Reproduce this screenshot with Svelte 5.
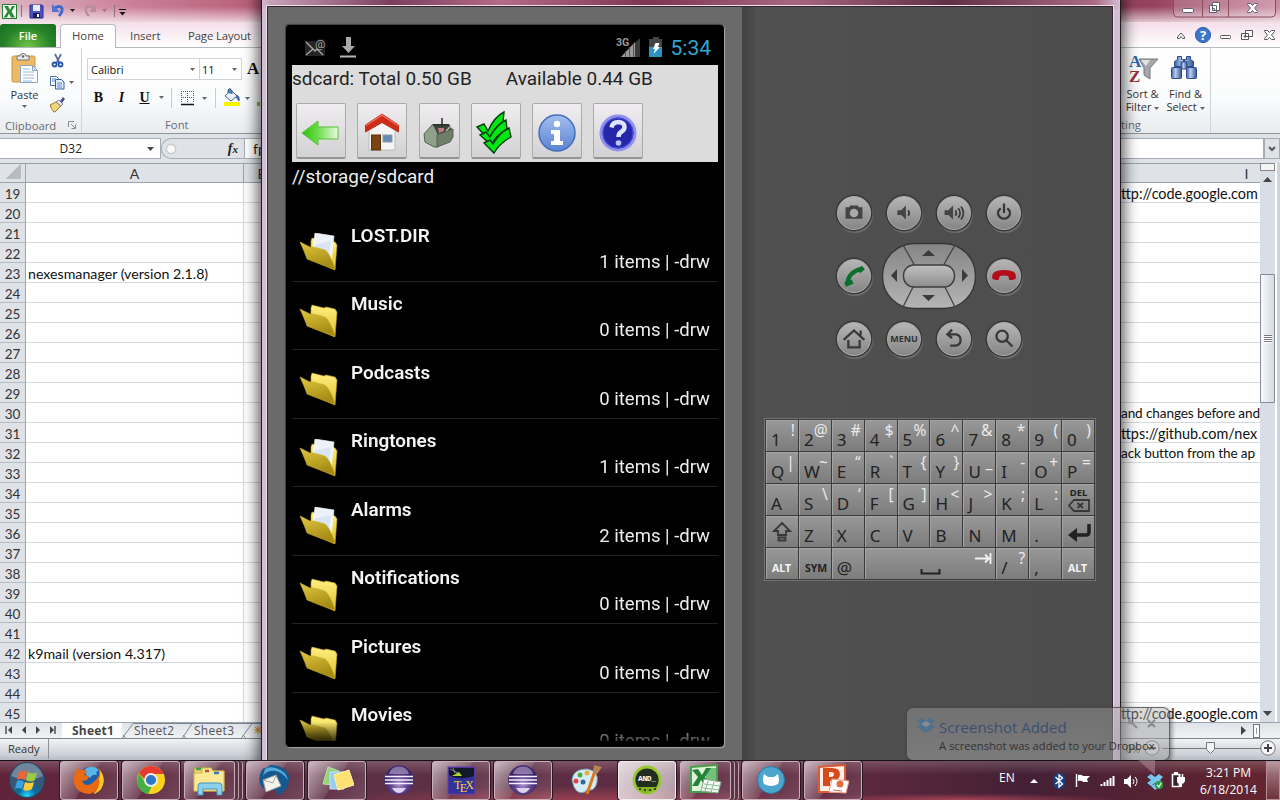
<script>
  const notes = { 23: 'nexesmanager (version 2.1.8)', 42: 'k9mail (version 4.317)' };
  const links = {
    19: 'ttp://code.google.com',
    30: 'and changes before and',
    31: 'ttps://github.com/nex',
    32: 'ack button from the ap',
    45: 'ttp://code.google.com'
  };
  const prose = [30, 32];
  const rows = Array.from({ length: 27 }, (_, i) => 19 + i);
  const folders = [
    ['LOST.DIR', 1], ['Music', 0], ['Podcasts', 0], ['Ringtones', 1],
    ['Alarms', 2], ['Notifications', 0], ['Pictures', 0], ['Movies', 0]
  ];
  const keys = [
    ['1', '!'], ['2', '@'], ['3', '#'], ['4', '$'], ['5', '%'], ['6', '^'], ['7', '&'], ['8', '*'], ['9', '('], ['0', ')'],
    ['Q', '|'], ['W', '~'], ['E', '“'], ['R', '`'], ['T', '{'], ['Y', '}'], ['U', '_'], ['I', '-'], ['O', '+'], ['P', '='],
    ['A', ''], ['S', '\\'], ['D', '‘'], ['F', '['], ['G', ']'], ['H', '<'], ['J', '>'], ['K', ';'], ['L', ':'], ['DEL', '', 'del'],
    ['', '', 'shift'], ['Z', ''], ['X', ''], ['C', ''], ['V', ''], ['B', ''], ['N', ''], ['M', ''], ['.', ''], ['', '', 'enter'],
    ['ALT', '', 'alt'], ['SYM', '', 'sym'], ['@', ''], ['', '', 'space'], ['/', '?'], [',', ''], ['ALT', '', 'alt']
  ];
  const apps = [
    'firefox', 'chrome', 'explorer', 'thunderbird', 'notes', 'eclipse', 'tex', 'eclipse2', 'paint', 'android', 'excel', 'github', 'powerpoint'
  ];
  const bare = ['eclipse', 'paint'];
  const stacked = ['explorer', 'excel'];
</script>

{#snippet drop()}<svg class="drop" width="5" height="3" viewBox="0 0 5 3"><path d="M0 0h5L2.5 3z" fill="#666" /></svg>{/snippet}

<div class="desktop">
  <section class="excel">
    <header class="title">
      <svg width="130" height="22" viewBox="0 0 130 22">
        <rect x="2.500" y="4.500" width="14" height="14" fill="#f2faf2" stroke="#2a7a35" />
        <path d="M4 6l4 0 2 4 2-4h3l-3.500 5.500 3.500 6h-4l-2-4-2 4H3.500l4-6z" fill="#2b8b3a" />
        <path d="M21.500 5v12M114.500 5v12" stroke="#8c6f7c" />
        <path d="M30 5h12l1 1v12H30z" fill="#4a52c4" stroke="#2d2f86" />
        <path d="M33 5h7v6h-7z" fill="#e9edff" /><path d="M33 13h7v5h-7z" fill="#1c1e4c" /><path d="M37 14h2v3h-2z" fill="#fff" />
        <path d="M54 9c4-4 9-3 8 2-.3 2-1.500 3-3 5" fill="none" stroke="#3f68c8" stroke-width="2.800" /><path d="M52 4v8h8z" fill="#4c76d2" />
        <path d="M70 9h5l-2.500 3z" fill="#222" />
        <path d="M86 9c4-4 9-3 8 2" transform="translate(180 0) scale(-1 1)" fill="none" stroke="#b58d9c" stroke-width="2.200" /><path d="M86 11c0 2 1 3 3 5" fill="none" stroke="#b58d9c" stroke-width="2.200" /><path d="M96 5v7h-7z" fill="#b58d9c" />
        <path d="M102 9h5l-2.500 3z" fill="#9a7683" />
        <path d="M119 9.500h7" stroke="#111" /><path d="M119.500 12h6l-3 3.500z" fill="#111" />
      </svg>
      <svg class="caption" width="104" height="18" viewBox="0 0 104 18">
        <path d="M.5 0v13q0 4 4 4h94q4 0 4-4V0M29.500 0v17M55.500 0v17" fill="#ffffff28" stroke="#8c4a61" />
        <rect x="9.500" y="8.500" width="11" height="4" rx="1" fill="#fff" stroke="#656072" />
        <path d="M39.500 2.500h7v8h-7zM36.500 5.500h7v7h-7zM39.500 8.500h2v2h-2z" fill="#fff" stroke="#656072" />
        <path d="M74.500 3.500h3l2 2 2-2h3v1l-3 3.500 3 3.500v1h-3l-2-2-2 2h-3v-1l3-3.500-3-3.500z" fill="#fff" stroke="#656072" />
      </svg>
    </header>
    <nav class="tabs">
      <b class="file">File</b><span class="home">Home</span><span class="ins">Insert</span><span class="page">Page Layout</span>
      <svg class="wincontrols" width="100" height="20" viewBox="0 0 100 20">
        <path d="M2.500 12l3.500-4 3.500 4v1.500h-2L6 11.500 4.500 13.500h-2z" fill="#fff" stroke="#555" />
        <circle cx="28" cy="10" r="7.600" fill="#3b76cb" stroke="#2f5fae" />
        <text x="28" y="15" text-anchor="middle" font-size="13" font-weight="700" fill="#fff">?</text>
        <rect x="45.500" y="10.500" width="10" height="3" rx="1" fill="#fff" stroke="#555" />
        <path d="M70.500 5.500h7v6h-7zM66.500 8.500h7v6h-7zM69 11h2v1h-2z" fill="#fff" stroke="#555" />
        <path d="M89.500 5.500h3l2 2 2-2h3v1l-3 3.500 3 3.500v1h-3l-2-2-2 2h-3v-1l3-3.500-3-3.500z" fill="#fff" stroke="#555" />
      </svg>
    </nav>
    <div class="ribbon">
      <div class="group clipboard">
        <div class="tools">
          <div class="paste">
            <svg width="28" height="32" viewBox="0 0 28 32">
              <rect x="1" y="3" width="23" height="26" rx="1.500" fill="#edbb66" stroke="#c79545" />
              <path d="M6 3h3q0-2.500 3-2.500T15 3h3v4H6z" fill="#e6e8ec" stroke="#777" /><circle cx="12" cy="3.500" r="1.200" fill="#666" />
              <path d="M9.500 12.500h12l5 5v12h-17z" fill="#fff" stroke="#8ba4c8" /><path d="M12 16h7M12 19h11M12 22h11M12 25h11M12 28h9" stroke="#9bb6dc" />
              <path d="M21.500 12.500v5h5z" fill="#d5e2f4" stroke="#8ba4c8" />
            </svg>
            <span>Paste</span>{@render drop()}
          </div>
          <svg class="clips" width="26" height="62" viewBox="0 0 26 62">
            <path d="M6 2l4.500 9M12 2L7.500 11" stroke="#596d93" stroke-width="1.700" /><circle cx="5.500" cy="12.500" r="2" fill="none" stroke="#2355ad" stroke-width="1.800" /><circle cx="11.500" cy="12.500" r="2" fill="none" stroke="#2355ad" stroke-width="1.800" />
            <path d="M1.500 24.500h6l2 2v7h-8z" fill="#f4f8ff" stroke="#4b70b0" /><path d="M6.500 27.500h6l2.500 2.500v7H6.500z" fill="#e5eeff" stroke="#315da8" /><path d="M8 31h5M8 33h5M8 35h5M3 27h4M3 29h3" stroke="#5f87c8" />
            <path d="M20 29h5l-2.500 3z" fill="#666" />
            <path d="M1 53l6-3 5 4-6 6q-2 1-5-7z" fill="#efd57e" stroke="#9b7b2a" /><path d="M7 50l3-2 4 4-2 2z" fill="#e5e5ee" stroke="#888" /><path d="M11 49l3-4 2 2-3 4z" fill="#4e4d8f" />
          </svg>
        </div>
        <div class="label">Clipboard <svg width="8" height="8" viewBox="0 0 8 8"><path d="M.5 6V.5H6M3 3l4 4M7.500 3.500v4h-4" fill="none" stroke="#888" /></svg></div>
      </div>
      <div class="group font">
        <div class="combos"><div class="combo face">Calibri {@render drop()}</div><div class="combo size">11 {@render drop()}</div><b class="grow">A</b></div>
        <div class="styles">
          <b>B</b><i>I</i><u>U</u>{@render drop()}
          <svg class="fmt" width="92" height="22" viewBox="0 0 92 22">
            <path d="M3.500 1v20M47.500 1v20" stroke="#c8cbd0" />
            <path d="M13.500 4v12M19.500 4v12M25.500 4v12M13 4.500h13M13 10.500h13" stroke="#555" stroke-dasharray="1 1" /><path d="M13 17.500h13" stroke="#111" stroke-width="1.500" />
            <path d="M34 10h5l-2.500 3z" fill="#666" />
            <path d="M57 9l6-6 6 6-6 5z" fill="#e9f0fa" stroke="#44608d" /><path d="M60 6V3q2-3 4 1v3M68 8q4 1 3 6l-3-4" fill="#517bbb" stroke="#44608d" />
            <path d="M56 15h16v4H56z" fill="#fbf400" /><path d="M77 10h5l-2.500 3z" fill="#666" /><path d="M89 15h3v4h-3z" fill="#81bf4b" />
          </svg>
        </div>
        <div class="label">Font</div>
      </div>
      <div class="group edit">
        <div class="tools">
          <div class="big">
            <svg width="32" height="32" viewBox="0 0 32 32">
              <text x="2" y="14" font-family="Liberation Serif" font-size="17" font-weight="700" fill="#315eac">A</text>
              <text x="2" y="29" font-family="Liberation Serif" font-size="17" font-weight="700" fill="#9c2f38">Z</text>
              <path d="M12 6h19l-8 9v11l-6-4v-7z" fill="#a5a7ab" stroke="#74777c" /><path d="M14 7h9l-4 6z" fill="#e2e4e6" />
            </svg>
            <span>Sort &amp;<br />Filter {@render drop()}</span>
          </div>
          <div class="big">
            <svg width="32" height="32" viewBox="0 0 32 32">
              <defs><linearGradient id="gb"><stop stop-color="#3f64a8" /><stop offset=".4" stop-color="#b9cdf0" /><stop offset="1" stop-color="#34578f" /></linearGradient></defs>
              <g fill="url(#gb)" stroke="#2d4c88"><path d="M7.500 3.500h4v3h2v7h-9v-5l3-2zM16.500 3.500h4v3l3 2v5h-9v-7h2z" /><rect x="11" y="9" width="6" height="7" /><rect x="1.500" y="14.500" width="10" height="11" rx="1" /><rect x="16.500" y="14.500" width="10" height="11" rx="1" /></g>
            </svg>
            <span>Find &amp;<br />Select {@render drop()}</span>
          </div>
        </div>
        <div class="label">Editing</div>
      </div>
    </div>
    <div class="formula">
      <div class="name">D32<svg width="8" height="4" viewBox="0 0 8 4"><path d="M0 0h7L3.500 4z" fill="#444" /></svg></div>
      <div class="fx"><i></i><em>f<small>x</small></em></div>
      <div class="entry">fp</div>
      <div class="expand"><svg width="8" height="6" viewBox="0 0 8 6"><path d="M1 1l3 3 3-3" fill="none" stroke="#555" stroke-width="2" /></svg></div>
    </div>
    <div class="book">
      <div class="sheet">
        <div class="heads"><div class="corner"></div><div class="colA">A</div><div class="colB">B</div><div class="colI">I</div></div>
        {#each rows as n}
          <div class="row"><div class="num">{n}</div><div class="cell">{notes[n] ?? ''}</div><div class="mid"></div><div class="cell link" class:prose={prose.includes(n)}>{links[n] ?? ''}</div></div>
        {/each}
      </div>
      <div class="scroll">
        <i class="split"></i>
        <svg width="9" height="5" viewBox="0 0 9 5"><path d="M0 5h9L4.500 0z" fill="#444" /></svg>
        <div class="thumb"><i></i></div>
        <svg width="9" height="5" viewBox="0 0 9 5"><path d="M0 0h9L4.500 5z" fill="#444" /></svg>
      </div>
    </div>
    <div class="sheets">
      <svg width="62" height="16" viewBox="0 0 62 16"><path d="M6 3v8M55 3v8" stroke="#444" stroke-width="1.400" /><path d="M12 3v8L8 7zM26 3v8l-4-4zM36 3v8l4-4zM50 3v8l4-4z" fill="#444" /></svg>
      <b class="tab1">Sheet1</b>
      <svg class="tabshape" width="140" height="16" viewBox="0 0 140 16"><path d="M0 15.500L11 .5h137M0 15.500h140M60 15.500L70 .5M119 15.500l11-15M1 12l3 3.500M61 12l3 3.500M121 12l3 3.500" fill="none" stroke="#7d8590" /><text x="12" y="12" textLength="40">Sheet2</text><text x="72" y="12" textLength="40">Sheet3</text><path d="M136 3v8M132 7h8M133 4l6 6M139 4l-6 6" stroke="#d58d20" /></svg>
      <svg class="hs" width="140" height="16" viewBox="0 0 140 16"><path d="M121 3v9l5-4.500z" fill="#444" /><rect x="133.500" y="1.500" width="6" height="13" fill="#fff" stroke="#777" /><path d="M136.500 5v6" stroke="#999" /></svg>
    </div>
    <footer class="ready"><span>Ready</span>
      <div class="zoom">0%<svg width="140" height="20" viewBox="0 0 140 20"><path d="M22 9.500h100" stroke="#777" /><path d="M66.500 3.500h8v7l-4 4-4-4z" fill="#f4f5f7" stroke="#777" /><circle cx="12" cy="9" r="7.200" fill="#f5f5f7" stroke="#777" /><path d="M8 9h8" stroke="#444" stroke-width="2" /><circle cx="128" cy="9" r="7.200" fill="#f5f5f7" stroke="#777" /><path d="M124 9h8M128 5v8" stroke="#444" stroke-width="2" /></svg></div>
    </footer>
  </section>

  <section class="emulator">
    <div class="device">
      <div class="bezel">
        <div class="screen">
          <div class="status">
            <svg width="60" height="28" viewBox="0 0 60 28"><rect x="2" y="7" width="20" height="15" fill="#252525" /><path d="M3 8l9 9 7-7M3 21l7-6M20 21l-6-6" fill="none" stroke="#aaa" stroke-width="1.300" /><circle cx="17.500" cy="10" r="5.500" fill="#161616" /><text x="12" y="14" font-family="Roboto" font-size="11.500" fill="#aaa">@</text><path d="M43 3h5v9h4l-6.500 7L39 12h4z" fill="#a9a9a9" /><path d="M37 22.500h16" stroke="#b5b5b5" stroke-width="2" /></svg>
            <svg class="radio" width="52" height="28" viewBox="0 0 52 28"><text x="0" y="11.500" font-family="Roboto" font-size="10.500" font-weight="700" fill="#999">3G</text><path d="M5 23L24 4v19z" fill="#393939" /><path d="M5 23L19 8v15z" fill="#999" /><path d="M9.500 17v6M13.500 13v10M17.500 10v13" stroke="#555" /><rect x="33" y="5" width="13" height="18" fill="#444" /><rect x="37" y="3" width="6" height="3" fill="#444" /><rect x="33" y="13" width="13" height="10" fill="#2b93bd" /><path d="M39.500 9h4l-1.500 4h2l-6.500 7 1.500-5h-2z" fill="#fff" /></svg>
            <time>5:34</time>
          </div>
          <div class="panel">
            <div class="sizes"><span>sdcard: Total 0.50 GB</span><span>Available 0.44 GB</span></div>
            <div class="actions">
              <button aria-label="Back"><svg width="40" height="40" viewBox="0 0 40 40"><defs><linearGradient id="ga"><stop stop-color="#31bd12" /><stop offset=".4" stop-color="#64dc41" /><stop offset="1" stop-color="#e8f9e3" /></linearGradient></defs><path d="M1 20L17 8v6h20v12H17v6z" fill="url(#ga)" stroke="#55c239" /></svg></button>
              <button aria-label="Home"><svg width="40" height="40" viewBox="0 0 40 40"><path d="M7 16L20 6l13 10v21H7z" fill="#f5f5f5" stroke="#bbb" /><path d="M3.500 12L20 1l16.500 11v7L20 9.500 3.500 19z" fill="#cf2c18" stroke="#ba321f" /><path d="M3.500 12L20 1l16.500 11-1 1L20 3 4.500 13z" fill="#ee6959" /><rect x="9.500" y="22" width="9" height="15" fill="#7a4510" stroke="#5b300a" /><rect x="21" y="22" width="9" height="7" fill="#658cb0" stroke="#8b9aa8" /></svg></button>
              <button class="narrow" aria-label="Tools"><svg width="34" height="40" viewBox="0 0 34 40"><path d="M2 21l9-10 5 10v13l-4 0-9-5z" fill="#8fa18a" stroke="#53634f" /><path d="M11 11h16l4 7-15 4z" fill="#3d453c" /><path d="M15 22l16-6v8l-3 5-13 5z" fill="#6d7f68" stroke="#53634f" /><path d="M11 12h16M20 5v9" stroke="#2c302c" stroke-width="1.500" /><path d="M16 15h6v3l-5 2z" fill="#c27c7c" /><path d="M24 18l5-5" stroke="#b5b5b5" stroke-width="1.500" /></svg></button>
              <button aria-label="Select"><svg width="44" height="46" viewBox="0 0 44 46"><g fill="#00e813" stroke="#063b0a" stroke-width="1.400"><path d="M3 17l7-3 4 7q6-14 16-19l-1 10q-10 6-14 18z" /><path d="M6 25l6-3 4 5q6-12 16-17l1 9q-11 6-16 16z" /><path d="M10 33l6-3 3 4q6-11 16-16l2 9q-11 6-17 16z" /></g></svg></button>
              <button aria-label="Info"><svg width="40" height="40" viewBox="0 0 40 40"><defs><linearGradient id="gi" x2="0" y2="1"><stop stop-color="#a4bdef" /><stop offset="1" stop-color="#5a82d1" /></linearGradient></defs><circle cx="20" cy="20" r="18" fill="url(#gi)" stroke="#426fba" stroke-width="1.500" /><circle cx="20" cy="11" r="3.200" fill="#fff" /><path d="M14 17h9v11h3v4H14v-4h3v-7h-3z" fill="#fff" /></svg></button>
              <button aria-label="Help"><svg width="40" height="40" viewBox="0 0 40 40"><circle cx="20" cy="20" r="17" fill="#2527a8" stroke="#9090ef" stroke-width="3" /><circle cx="20" cy="20" r="15" fill="none" stroke="#4b4edb" /><path d="M13.500 14.500q1-5.500 7-5.500 6 .5 6 5 0 3-3.500 5-2.500 1.500-2.500 5" fill="none" stroke="#dfe4ff" stroke-width="4.500" /><circle cx="20.500" cy="30" r="2.800" fill="#b9c4ff" /></svg></button>
            </div>
          </div>
          <div class="path">//storage/sdcard</div>
          <div class="list">
            {#each folders as [name, count]}
              <div class="folder" class:filled={count > 0}>
                <svg width="40" height="42" viewBox="0 0 40 42">
                  <defs><linearGradient id="fb" x2="0" y2="1"><stop stop-color="#fff07e" /><stop offset="1" stop-color="#dcbf35" /></linearGradient><linearGradient id="ff" x2=".4" y2="1"><stop stop-color="#e0c83e" /><stop offset="1" stop-color="#a58a14" /></linearGradient></defs>
                  <path d="M12 8l1-3 12 3 2-1 9 2 2 3-2 25-24-12z" fill="url(#fb)" stroke="#bd9d22" stroke-width=".6" />
                  {#if count}<path d="M16 0l19 3-3 26-18-14z" fill="#edf2fa" stroke="#fff" stroke-width=".6" /><path d="M15 12l17-4-3 19z" fill="#d9e5f4" />{/if}
                  <path d="M1 9l10 5 4 0 11 3q4 2 10 18l-1 1.500L8 26Q6 20 1 9z" fill="url(#ff)" stroke="#cbb02e" stroke-width=".6" />
                </svg>
                <div class="info"><b>{name}</b><span>{count} items | -drw</span></div>
              </div>
            {/each}
          </div>
        </div>
      </div>
      <div class="controls">
        <div class="pad">
          <div class="round"><svg viewBox="0 0 34 34"><path d="M8 11h4l1-2h8l1 2h4v12H8z" /><circle cx="17" cy="17" r="4.500" fill="#aaa" /></svg></div>
          <div class="round"><svg viewBox="0 0 34 34"><path d="M10 14h4l5-5v15l-5-5h-4z" /><path class="line" d="M21.500 14q2 3 0 6" /></svg></div>
          <div class="round"><svg viewBox="0 0 34 34"><path d="M7 14h4l5-5v15l-5-5H7z" /><path class="line" d="M18.500 14q2 3 0 6M21.500 12q4 5 0 10M24.500 10q5 7 0 14" /></svg></div>
          <div class="round"><svg viewBox="0 0 34 34"><path class="line bold" d="M13.500 12q-4 3-2.500 7 2 4 6 4t6-4q1.500-4-2.500-7M17 7v10" /></svg></div>
          <div class="round"><svg viewBox="0 0 34 34"><g fill="none" stroke="#08702a"><path d="M10 25Q11 13 24 9.500" stroke-width="4.500" /><path d="M7.500 26l8-3M22 12l5-4" stroke-width="5" /></g></svg></div>
          <div class="dpad"><svg width="96" height="68" viewBox="0 0 96 68"><defs><linearGradient id="gd" x2="0" y2="1"><stop stop-color="#858585" /><stop offset="1" stop-color="#b5b5b5" /></linearGradient><linearGradient id="gc" x2="0" y2="1"><stop stop-color="#c0c0c0" /><stop offset="1" stop-color="#8d8d8d" /></linearGradient></defs><rect x="1.500" y="1.500" width="93" height="65" rx="32" fill="url(#gd)" stroke="#363636" stroke-width="1.400" /><path d="M22 3l12 21M74 3L62 24M22 65l10-20M74 65L64 45" stroke="#444" stroke-width="1.300" /><rect x="22.500" y="23" width="51" height="22" rx="10.500" fill="url(#gc)" stroke="#3e3e3e" stroke-width="1.400" /><path d="M41 14h13l-6.500-6zM41 53h13l-6.500 6zM16 27v13l-6-6.500zM81 27v13l6-6.500z" fill="#3b3b3b" /></svg></div>
          <div class="round"><svg viewBox="0 0 34 34"><path d="M4.500 16q1-3 4-4 8.500-2.500 17 0 3.500 1 4 4v4q-4 2-7 1l-1-4q-4.500-1-9 0l-1 4q-3 1-7-1z" fill="#b30c1a" /></svg></div>
          <div class="round"><svg viewBox="0 0 34 34"><path class="line bold" d="M6 18L17 8l11 10M11 18v8h12v-8M24 8v5" /></svg></div>
          <div class="round menu">MENU</div>
          <div class="round"><svg viewBox="0 0 34 34"><path class="line bold" d="M15 7l-5 5 5 4M10 12h9q5 1 5 6t-5 6h-6" /></svg></div>
          <div class="round"><svg viewBox="0 0 34 34"><circle class="line bold" cx="15" cy="14" r="6" /><path class="line bold" d="M19 18l7 7" /></svg></div>
        </div>
        <div class="keys">
          {#each keys as [main, alt, kind]}
            <div class="key {kind ?? ''}">
              {#if kind === 'shift'}<svg width="22" height="22" viewBox="0 0 22 22"><path class="line" d="M10 2l8 8h-4v4H6v-4H2zM6.500 16.500h7v3h-7z" /></svg>
              {:else if kind === 'enter'}<svg width="24" height="20" viewBox="0 0 24 20"><path d="M21 2v8q0 3-3 3H8" fill="none" stroke="#222" stroke-width="3.500" /><path d="M0 13l9-7v14z" fill="#222" /></svg>
              {:else if kind === 'space'}<svg width="131" height="30" viewBox="0 0 131 30"><path d="M55.500 20v4.500h18V20" fill="none" stroke="#222" stroke-width="2" /><path d="M109 9.500h13M119 5.500l4 4-4 4M124.500 4v11" fill="none" stroke="#f2f2f2" stroke-width="1.800" /></svg>
              {:else}<span>{main}</span><sup>{alt}</sup>
                {#if kind === 'del'}<svg width="22" height="13" viewBox="0 0 22 13"><path class="line" d="M1 6.500L6 1h15v11H6zM9.500 4l5.500 5M15 4L9.500 9" /></svg>{/if}
              {/if}
            </div>
          {/each}
        </div>
      </div>
    </div>
  </section>

  <aside class="toast">
    <svg width="18" height="16" viewBox="0 0 18 16"><path d="M5 0l4 3 4-3 5 3-4 3 4 3-5 3-4-3-4 3-5-3 4-3-4-3zM4 12l5-2 5 2-5 3z" fill="#4d718e" /><path d="M4 6l5-3 5 3-5 3z" fill="#878b8e" /></svg>
    <div><h4>Screenshot Added</h4><p>A screenshot was added to your Dropbox</p></div>
    <svg class="close" width="32" height="12" viewBox="0 0 32 12"><path d="M4 3l7 7M3 1v4h4M22 2l7 7M29 2l-7 7" fill="none" stroke="#8c8c8c" stroke-width="2.200" /></svg>
  </aside>

  <footer class="taskbar">
    <div class="start"><svg width="38" height="38" viewBox="0 0 38 38"><defs><radialGradient id="orb" cy=".95"><stop stop-color="#27d9fc" /><stop offset=".5" stop-color="#0b6b9f" /><stop offset="1" stop-color="#385776" /></radialGradient></defs><circle cx="19" cy="19" r="17.500" fill="url(#orb)" stroke="#234458" /><path d="M3 15Q8 2 19 2t16 13q-15 7-32 0z" fill="#ffffff48" /><path d="M11 11q4-3 8 0l-2 8q-4-3-8 0z" fill="#ed6535" /><path d="M20 11q5 3 9 0l-2 8q-4 3-9 0z" fill="#98cb42" /><path d="M9 20q4-2 7 1l-2 7q-4-2-7 0z" fill="#3ba2e2" /><path d="M17 21q5 2 9 0l-2 7q-4 3-9 1z" fill="#fccc38" /></svg></div>
    <div class="apps">
      {#each apps as app}
        <div class="app {app}" class:bare={bare.includes(app)} class:stacked={stacked.includes(app)}>
          <svg width="34" height="34" viewBox="0 0 34 34">
            {#if app === 'firefox'}
              <circle cx="18" cy="16" r="12" fill="#1d5fa8" /><path d="M13 6q8-5 14 1-4 2-2 5-5-1-7 3-5-2-5-9z" fill="#59b6e8" /><path d="M4 8l3-3 0 3q3-2 6-1l2 1-3 4 5 1-2 4-5 1q3 6 9 3l5-4q6-7 2-12 6 4 5 12-2 12-14 14Q4 30 2 19 1 12 4 8z" fill="#e96a14" /><path d="M27 7q7 7 4 15-3 8-10 9 8-6 6-15 2-4 0-9z" fill="#fdc62d" />
            {:else if app === 'chrome'}
              <circle cx="17" cy="17" r="14" fill="#fbd21c" /><path d="M5 10Q9 3 17 3t13 8H17q-5 1-6 6z" fill="#e53b31" /><path d="M5 10l7 11 6 2-4 8Q5 29 3 20q0-5 2-10z" fill="#48ad43" /><circle cx="17" cy="17" r="6" fill="#3177c8" stroke="#eee" stroke-width="1.800" />
            {:else if app === 'explorer'}
              <path d="M2 5h11l2 3h17v20H2z" fill="#eed66e" stroke="#b49138" /><path d="M10 5h9l2 3h11v20H2V10h8z" fill="#fbe996" stroke="#d2b251" /><path d="M4 6h5" stroke="#3fa045" stroke-width="2.500" /><path d="M13 8h4" stroke="#c74b35" stroke-width="2.500" /><path d="M22 10h5" stroke="#3c78b9" stroke-width="2.500" /><path d="M9 20h18q3 0 3 3v9h-5v-6H11v6H6v-9q0-3 3-3z" fill="#8bd1ee" stroke="#4395bb" />
            {:else if app === 'thunderbird'}
              <path d="M6 5q3 1 6-3 15 0 19 11 1 12-8 18l-5 1 3-4-12-1Q-1 24 2 12q1-5 4-7z" fill="#155990" /><path d="M7 6q4-3 11-1 10 3 12 12-6-8-12-9Q9 7 5 13z" fill="#57a9dc" /><path d="M5 17l13-5 5 11-15 6z" fill="#f4f3ec" stroke="#9d9b92" /><path d="M5 17l10 3 3-8" fill="none" stroke="#aaa" />
            {:else if app === 'notes'}
              <path d="M8 4l11 4-4 14-12-1z" fill="#94d57b" stroke="#bddfac" /><path d="M10 9h14v17H10z" fill="#99ccf0" stroke="#c4e4f9" /><path d="M14 12l15-5 5 15-16 5z" fill="#fde171" stroke="#fff4a6" />
            {:else if app.startsWith('eclipse')}
              <defs><radialGradient id="ge" cy=".65"><stop stop-color="#a893cf" /><stop offset=".55" stop-color="#65468f" /><stop offset="1" stop-color="#3a2462" /></radialGradient></defs>
              <circle cx="17" cy="17" r="14.500" fill="url(#ge)" stroke="#4a3472" /><path d="M7 11Q9 3.500 17 3.500T27 11z" fill="#c9bce088" /><path d="M10 25q3 5 7 5t7-5z" fill="#dcd2ed" /><path d="M3 13.500h28M3 17h28M3 20.500h28" stroke="#f4f0ff" stroke-width="1.500" />
            {:else if app === 'tex'}
              <rect x="4" y="4" width="27" height="27" fill="#30339a" stroke="#6b3aa5" /><path d="M5 5h25v8q-15 5-25-1z" fill="#111827" /><path d="M8 13l7-4 3 4z" fill="#afd53b" /><path d="M6 6l8 4M9 5l2 5" stroke="#888" /><text x="10" y="26" font-family="Liberation Serif" font-size="12" fill="#ffd52e" textLength="20">T<tspan dy="3">E</tspan><tspan dy="-3">X</tspan></text>
            {:else if app === 'paint'}
              <path d="M4 17Q5 6 19 6q12 2 10 13-2 9-8 8-2-2-4 2-10 4-13-12z" fill="#d5ecf6" stroke="#7aa4b9" /><circle cx="12" cy="12" r="2.500" fill="#57a841" /><circle cx="19" cy="10" r="2.500" fill="#e8b03b" /><circle cx="8" cy="18" r="2.500" fill="#df4543" /><circle cx="15" cy="19" r="2.500" fill="#326998" /><path d="M19 31l8-23" stroke="#dd7a18" stroke-width="3" /><path d="M25 9l1-7 8 2-5 7z" fill="#b78555" />
            {:else if app === 'android'}
              <circle cx="17" cy="17" r="13" fill="#222c20" stroke="#9ac82f" stroke-width="2.800" /><path d="M6 24q5 7 11 6t11-6z" fill="#87b421" /><text x="8" y="18" font-family="Liberation Mono" font-size="8" font-weight="700" fill="#fff" textLength="18">AND_</text><path d="M9 26h2M14 27h2M19 27h2M24 26h2" stroke="#31421b" stroke-width="2" />
            {:else if app === 'excel'}
              <path d="M3 4l26-2v27H3z" fill="#def2d7" stroke="#45a149" stroke-width="2" /><path d="M18 5h10v19H18z" fill="#75bf7d" /><path d="M4 7l6-1 4 6 4-7h5l-6 9 6 9h-6l-4-6-3 6H4l6-9z" fill="#248339" /><path d="M16 16l17 3-3 11-17-2z" fill="#f5faf2" stroke="#87a78b" /><path d="M20 18l-3 10M26 19l-3 10M16 21l16 2M15 25l16 2" stroke="#8abc92" />
            {:else if app === 'github'}
              <circle cx="17" cy="17" r="13.500" fill="#4ba5cf" stroke="#237ca8" /><path d="M10 11l4 3h6l4-3q2 7 0 10-7 4-14 0-2-4 0-10z" fill="#fff" />
            {:else}
              <path d="M3 4l26-2v27H3z" fill="#fff0e9" stroke="#dd5b31" stroke-width="2" /><path fill-rule="evenodd" d="M7 5h9q8 0 8 6 0 7-10 7v5H7zM13 9v5h2q3 0 3-3 0-2-3-2z" fill="#d8491a" /><path d="M16 16l17 2-3 12-17-1z" fill="#fff" stroke="#e6a08c" /><circle cx="24" cy="21" r="3.500" fill="#e56b42" /><path d="M17 27l9 1" stroke="#e56b42" />
            {/if}
          </svg>
        </div>
      {/each}
    </div>
    <div class="tray">
      <span>EN</span>
      <svg width="190" height="30" viewBox="0 0 190 30"><path d="M12 17h8l-4-4z" fill="#fff" /><rect x="35" y="7" width="12" height="16" rx="6" fill="#163f82" /><path d="M37.500 11l7 7-3.500 3V9l3.500 3-7 6" fill="none" stroke="#fff" stroke-width="1.300" /><path d="M58.500 8v13" stroke="#fff" stroke-width="1.500" /><path d="M60 9q4-1 5 1h7l-3 3 1 3h-5q-1-2-5-1z" fill="#fff" /><path d="M83.500 20v-2M86.500 20v-4M89.500 20v-6M92.500 20v-8M95.500 20v-10" stroke="#fff" stroke-width="2" /><path d="M106 13h3l4-4v13l-4-4h-3z" fill="#fff" /><path d="M115 13q2 2 0 5M117 11q4 4 0 9" fill="none" stroke="#fff" /><path d="M133 8l4 3 4-3 4 3-3 3 3 3-4 3-4-3-4 3-4-3 4-3-4-3zM133 20l4-2 4 3-4 3z" fill="#77c6ee" /><circle cx="141" cy="19" r="4" fill="#24a13b" /><path d="M139 19l2 2 2-4" fill="none" stroke="#fff" stroke-width="1.200" /><path d="M154.500 8.500h7v12h-7z" fill="#38202d" stroke="#fff" stroke-width="1.600" /><path d="M156 7h4" stroke="#fff" stroke-width="2" /><path d="M159 11h8v4q-1 3-3 3v3h-2v-3q-3 0-3-3z" fill="#fff" /><path d="M161.500 8v4M164.500 8v4" stroke="#fff" stroke-width="1.500" /></svg>
      <div class="clock"><span>3:21 PM</span><span>6/18/2014</span></div>
      <div class="peek"></div>
    </div>
    <i class="tail"></i>
  </footer>
</div>

<style>
  :global(body) { margin: 0; overflow: hidden; }
  :global(*) { box-sizing: border-box; }
  .desktop { position: relative; width: 1280px; height: 800px; overflow: hidden; font-family: "Open Sans", sans-serif; font-size: 11px; color: #333; }
  svg { display: block; flex: none; }
  .excel { height: 761px; display: flex; flex-direction: column; background: #dfe3e8; }
  .title { height: 22px; flex: none; display: flex; justify-content: space-between; background: linear-gradient(#ffffff00 30%, #ffffffb0), linear-gradient(90deg, #ddb5c5, #cb8199 10%, #b85f7b 20%, #96425f 90%, #c98ba0 100%); }
  .caption { margin-right: 3px; }
  .tabs { height: 26px; flex: none; display: flex; align-items: flex-end; background: linear-gradient(#f4dfe9, #fff); border-bottom: 1px solid #b5b9be; font-size: 11.300px; color: #444; }
  .file { width: 56px; height: 23px; background: radial-gradient(at 50% 100%, #70c444, #278329 60%, #176d21); border-radius: 3px 3px 0 0; color: #fff; text-align: center; line-height: 23px; font-weight: 600; font-size: 11px; }
  .home { width: 56px; height: 24px; margin: 0 0 -1px 4px; border: 1px solid #b5b9be; border-bottom: 0; border-radius: 4px 4px 0 0; background: #fff; text-align: center; line-height: 22px; }
  .ins { padding-left: 14px; line-height: 22px; width: 72px; }
  .page { line-height: 22px; width: 80px; letter-spacing: -.1px; }
  .wincontrols { margin-left: auto; margin-right: 5px; align-self: flex-start; margin-top: 3px; }
  .ribbon { height: 86px; flex: none; display: flex; background: linear-gradient(#fff, #fafbfc 60%, #e9ebee); border-bottom: 1px solid #90959b; }
  .group { position: relative; border-right: 1px solid #d0d3d7; display: flex; flex-direction: column; }
  .label { margin-top: auto; height: 16px; line-height: 15px; color: #666d78; text-align: center; font-size: 11.300px; }
  .tools { display: flex; }
  .clipboard { width: 82px; }
  .clipboard .label { display: flex; align-items: center; justify-content: space-between; padding: 0 5px; }
  .paste { width: 49px; display: flex; flex-direction: column; align-items: center; padding-top: 5px; line-height: 18px; gap: 1px; }
  .clips { margin-top: 4px; }
  .font { width: 1015px; align-items: flex-start; }
  .font .label { padding-left: 83px; }
  .combos { display: flex; padding: 10px 0 0 5px; font-size: 11px; color: #111; }
  .combo { height: 22px; border: 1px solid #d0d3d7; display: flex; align-items: center; justify-content: space-between; padding: 0 4px 0 3px; background: #fff; }
  .face { width: 113px; }
  .size { width: 43px; margin-left: -1px; padding-left: 2px; }
  .grow { font: 700 17px/22px "Liberation Serif"; padding-left: 5px; }
  .styles { display: flex; align-items: center; height: 35px; padding-left: 8px; font: 14px "Liberation Serif"; color: #111; }
  .styles > b, .styles > i, .styles > u { width: 23px; text-align: center; flex: none; font-weight: 700; padding-right: 6px; }
  .fmt { margin-left: 4px; }
  .edit { width: 114px; padding-left: 24px; }
  .big { width: 43px; text-align: center; line-height: 13px; padding-top: 5px; display: flex; flex-direction: column; align-items: center; white-space: nowrap; gap: 2px; }
  .big span :global(.drop) { display: inline-block; vertical-align: middle; }
  .edit .label { margin-left: -16px; text-align: left; }
  .formula { height: 29px; flex: none; display: flex; padding: 4px 0; background: #dfe3e8; font-size: 12px; color: #222; }
  .name { width: 161px; background: #fff; border: 1px solid #a5acb5; border-left: 0; display: flex; align-items: center; justify-content: flex-end; gap: 65px; padding-right: 5px; }
  .fx { width: 83px; border: 1px solid #a5acb5; border-radius: 10px 0 0 10px; border-right: 0; display: flex; align-items: center; justify-content: space-between; padding: 0 6px 0 5px; }
  .fx i { width: 8px; height: 8px; border-radius: 50%; background: #f8f8f8; box-shadow: 0 0 2px #777; }
  .fx em { font: italic 700 14px "Liberation Serif"; } .fx small { font-size: 11px; }
  .entry { flex: 1; background: #fff; border: 1px solid #a5acb5; padding: 0 8px; font: 14px/20px Lato; }
  .expand { width: 16px; display: grid; place-items: center; border: 1px solid #a5acb5; }
  .book { height: 560px; flex: none; display: flex; overflow: hidden; }
  .sheet { width: 1260px; background: #fff; font: 14.400px/19px Lato, sans-serif; color: #111; }
  .heads { display: flex; height: 20px; line-height: 20px; background: #dfe3e8; border-top: 1px solid #9aa4b0; border-bottom: 1px solid #9aa4b0; text-align: center; color: #333; font-size: 14px; }
  .corner { width: 26px; border-right: 1px solid #9aa4b0; background: linear-gradient(135deg, transparent 58%, #b8bdc5 58%); background-size: 21px 15px; background-repeat: no-repeat; }
  .colA { width: 218px; border-right: 1px solid #9aa4b0; } .colB { width: 36px; } .colI { margin-left: auto; width: 27px; }
  .row { display: flex; height: 20px; border-bottom: 1px solid #d5d8dd; }
  .num { width: 26px; height: 20px; flex: none; background: #dfe3e8; border-right: 1px solid #9aa4b0; border-bottom: 1px solid #b3bbc5; text-align: center; color: #333; font-size: 13.500px; line-height: 22px; }
  .cell { width: 218px; flex: none; border-right: 1px solid #d5d8dd; padding-left: 2px; white-space: nowrap; line-height: 21px; height: 19px; font-size: 14.200px; }
  .mid { flex: 1; }
  .cell.link { width: 139px; padding: 0; border: 0; overflow: hidden; font-size: 14.400px; }
  .cell.prose { font-size: 13.600px; letter-spacing: -.12px; }
  .scroll { flex: 1; background: linear-gradient(90deg, #d9dee6 15px, #fff 15px, #fff 17px, #ccd2da 17px); display: flex; flex-direction: column; padding: 0 5px 7px 0; align-items: center; }
  .split { width: 15px; height: 8px; border: 1px solid #888; background: #f5f5f5; margin-bottom: 6px; flex: none; }
  .thumb { width: 15px; height: 129px; margin: 92px 0 auto; border: 1px solid #848c99; border-radius: 1px; background: linear-gradient(90deg, #f8f9fb, #d5dae3); display: grid; place-items: center; }
  .thumb i { width: 8px; height: 8px; background: repeating-linear-gradient(#777 0 1px, #fff 1px 2px); }
  .sheets { height: 16px; flex: none; display: flex; background: linear-gradient(#dfe3e8, #f0f2f4); border-top: 1px solid #9aa4b0; font-size: 12px; color: #444; margin-top: -1px; }
  .tab1 { width: 60px; padding-left: 10px; background: #fff; line-height: 15px; font-size: 12px; letter-spacing: .2px; }
  .tabshape { font-size: 12px; } .tabshape text { fill: #555; }
  .hs { margin-left: auto; margin-right: 20px; }
  .ready { flex: 1; display: flex; justify-content: space-between; background: linear-gradient(#f1f2f4, #cdd1d7 70%, #b4bac3); border-top: 1px solid #80878f; }
  .ready > span { padding: 2px 8px 0 8px; height: 20px; border-right: 1px solid #8d939a; font-size: 11.100px; }
  .zoom { display: flex; font-size: 10px; line-height: 20px; }

  .emulator { position: absolute; left: 261px; top: -10px; width: 860px; height: 790px; padding: 14px 6px 0 4px; border: 1px solid #221c22; background: linear-gradient(90deg, #d2bacf 0, #c8a1b7 1%, #7b3f5c 15%, #b46b88 28%, #7c3553 45%, #a8667e 62%, #603047 80%, #a96a82 97%, #d3bdd3 100%) top / 100% 18px no-repeat, #d1bed4; box-shadow: 0 0 14px 3px #000a; }
  .device { height: 100%; display: flex; border: 1px solid #eee1e9; outline: 1px solid #34232d; outline-offset: -2px; background: #4e4e4e; }
  .bezel { width: 479px; padding: 18px 0 0 18px; background: #6a6a6a; border: solid #434343; border-width: 1px 4px 0 1px; }
  .screen { width: 438px; height: 722px; border-radius: 4px; background: #000; box-shadow: 1px 1px 1px #a8a8a8, -1px -1px 1px #424242; padding: 0 6px 6px; display: flex; flex-direction: column; font-family: Roboto, sans-serif; font-size: 18.900px; color: #eee; overflow: hidden; }
  .status { height: 40px; flex: none; display: flex; align-items: center; padding: 5px 7px 0 11px; }
  .radio { margin-left: auto; margin-right: 3px; }
  time { font-size: 21px; color: #2fa8d6; }
  .panel { height: 97px; flex: none; background: #dcdcdc; color: #222; }
  .sizes { height: 38px; display: flex; gap: 34px; line-height: 28px; font-size: 18.950px; }
  .actions { display: flex; align-items: flex-start; padding-left: 4px; gap: 11.300px; }
  button { width: 50px; height: 56px; display: grid; place-items: center; border: 1px solid #aaa; border-bottom: 2px solid #949494; border-radius: 2px; padding: 4px 0 0; background: linear-gradient(#f0edf0, #d2d1d3); }
  .narrow { width: 41px; }
  .path { height: 51px; flex: none; line-height: 30px; }
  .list { overflow: hidden; flex: 1; -webkit-mask-image: linear-gradient(#000 509px, #0004 528px); mask-image: linear-gradient(#000 509px, #0004 528px); }
  .folder { height: 68.500px; display: flex; align-items: center; padding: 4px 8px 0 7px; border-bottom: 1px solid #232323; }
  .folder > svg { margin-top: 7px; }
  .folder.filled > svg { margin-top: 11px; }
  .info { flex: 1; display: flex; flex-direction: column; padding-left: 12px; line-height: 26px; }
  .info b { font-weight: 600; font-size: 18.900px; color: #f4f4f4; }
  .info span { align-self: flex-end; font-size: 18.500px; }
  .controls { flex: 1; display: flex; flex-direction: column; align-items: center; background: linear-gradient(90deg, #444, #505050 3%, #4d4d4d); }
  .pad { width: 184px; margin: 190px 0 0 -1px; display: grid; grid-template-columns: repeat(4, 34px); column-gap: 16px; row-gap: 29px; height: 160px; }
  .round { width: 34px; height: 34px; border-radius: 50%; background: linear-gradient(#b5b5b5, #868686); border: 1px solid #aaa; box-shadow: 0 0 0 1.500px #393939, 1px 2px 1px 1px #707070; fill: #444; }
  .round svg { width: 32px; height: 32px; }
  .line { fill: none; stroke: #383838; stroke-width: 1.800; }
  .line.bold { stroke-width: 2.400; }
  .dpad { grid-column: 2 / 4; margin: -17px 0 -17px -6px; }
  .menu { font-size: 9px; line-height: 32px; font-weight: 700; text-align: center; color: #333; }
  .keys { width: 330px; height: 161px; margin-top: 63px; margin-left: 1px; display: grid; grid-template-columns: repeat(10, 1fr); grid-auto-rows: 31px; gap: 1px; padding: 1px; background: #3b3b3b; outline: 1px solid #737373; font-family: "Noto Sans"; color: #222; }
  .key { min-width: 0; position: relative; background: linear-gradient(#979797, #7c7c7c); border: 1px solid #a4a4a4; border-width: 1px 0 0 1px; display: flex; justify-content: space-between; padding: 0 3px 0 4px; }
  .key span { font-size: 17px; align-self: flex-end; line-height: 22px; }
  .key sup { font-size: 15.500px; line-height: 18px; color: #eaeaea; margin-left: -6px; vertical-align: top; }
  .shift, .enter { padding: 5px; align-items: center; }
  .space { grid-column: span 4; padding: 0; }
  .key.del { flex-direction: column; padding: 3px 5px; } .del sup { display: none; }
  .key.del span { font-size: 9.500px; line-height: 10px; font-weight: 700; align-self: center; }
  .key.alt span, .key.sym span { font-size: 10.500px; font-weight: 700; padding-left: 1px; } .alt span { color: #f5f5f5; }

  .toast { position: absolute; left: 906px; top: 707px; width: 264px; height: 54px; display: flex; padding: 10px 9px 0 10px; gap: 4px; border: 1px solid #333a; border-radius: 7px; background: linear-gradient(#a6a6a666, #9d9d9d90); box-shadow: 2px 2px 4px #0006; white-space: nowrap; color: #333; }
  .toast h4 { font-size: 15px; line-height: 18px; font-weight: 400; margin: 0; color: #3c4f70; }
  .toast p { margin: 1px 0 0; font-size: 11.200px; line-height: 17px; }
  .toast > div { width: 187px; flex: none; min-width: 0; overflow: visible; }
  .close { margin-left: -4px; }
  .taskbar { position: absolute; left: 0; top: 760px; width: 1280px; height: 40px; display: flex; border-top: 1px solid #171116; background: linear-gradient(#ffffff30, transparent 35%), radial-gradient(at 75% 100%, #a94355, transparent 12%), radial-gradient(at 45% 100%, #984051, transparent 25%), linear-gradient(90deg, #60243a, #5d3046 30%, #612a40 65%, #442036 80%, #66252f); }
  .start { width: 60px; padding-left: 8px; }
  .apps { display: flex; gap: 4px; }
  .app { width: 58px; height: 39px; display: grid; place-items: center; border: 1px solid #c9afb9; border-radius: 3px; background: linear-gradient(125deg, #ffffff99, #ffffff24 48%, #ffffff08 50%, #ffffff20); box-shadow: 0 0 0 1px #281820; }
  .app svg { margin-top: -1px; margin-left: -1px; }
  .bare { background: none; border-color: transparent; box-shadow: none; }
  .android { background: linear-gradient(125deg, #ffffffd0, #ffffff80); border-color: #eee; }
  .stacked { width: 51px; margin-right: 7px; box-shadow: 3px 0 #593544, 4px 0 #c0a0ad, 7px 0 #593544, 8px 0 #c0a0ad; }
  .tray { display: flex; margin-left: auto; color: #fff; }
  .tray > span { font-size: 12px; line-height: 34px; width: 19px; margin-left: -2px; }
  .tray > svg { margin-top: 5px; width: 190px; margin-right: -16px; }
  .clock { width: 74px; display: flex; flex-direction: column; align-items: center; font-size: 12px; line-height: 17px; padding: 3px 1px 0 0; }
  .peek { width: 14px; border: 1px solid #b68e99; background: linear-gradient(#ffffff70, #ffffff10); }
  .tail { position: absolute; left: 1138px; top: -1px; width: 17px; height: 15px; background: #c9a7b466; clip-path: polygon(0 0, 100% 0, 100% 100%); }
</style>
